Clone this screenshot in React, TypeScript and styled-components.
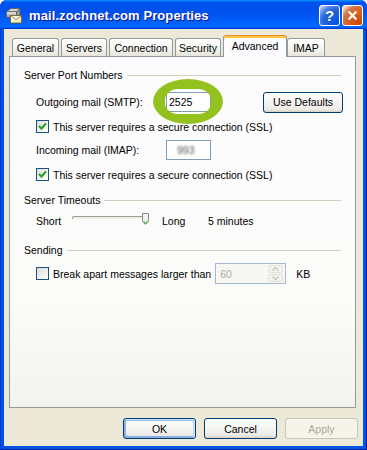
import React from "react";
import styled, { createGlobalStyle } from "styled-components";

const GlobalStyle = createGlobalStyle`
  html, body { margin: 0; padding: 0; background: #ffffff; }
  body {
    font-family: "Liberation Sans", Arial, sans-serif;
    font-size: 10.5px;
    color: #000;
  }
  * { box-sizing: border-box; }
`;

const Window = styled.div`
  width: 367px;
  height: 450px;
  display: flex;
  flex-direction: column;
  background: #0054e3;
  border-radius: 7px 7px 0 0;
  box-shadow: inset 1px 0 #0831d9, inset -1px 0 #001ea0, inset 0 -1px #001ea0;
  overflow: hidden;
`;

const TitleBar = styled.div`
  height: 29px;
  flex: none;
  display: flex;
  align-items: center;
  padding: 2px 4px 0 5px;
  background: linear-gradient(
    180deg,
    #0997ff,
    #0053ee 8%,
    #0050ee 40%,
    #0066ff 88%,
    #0066ff 93%,
    #005bff 95%,
    #003dd7 96%,
    #003dd7
  );
`;

const TitleText = styled.span`
  flex: 1;
  margin-left: 6px;
  font-weight: bold;
  font-size: 13px;
  color: #fff;
  text-shadow: 1px 1px #0f1089;
  letter-spacing: 0.1px;
`;

const CaptionButton = styled.div<{ $close?: boolean }>`
  width: 21px;
  height: 21px;
  margin-left: 2px;
  border: 1px solid #fff;
  border-radius: 3px;
  display: flex;
  align-items: center;
  justify-content: center;
  color: #fff;
  font-weight: bold;
  font-size: 15px;
  background: ${(p) =>
    p.$close
      ? "radial-gradient(circle at 90% 90%, #cc4600 0, #dc6527 55%, #cd7546 70%, #ffccb2 90%, #fff)"
      : "radial-gradient(circle at 90% 90%, #0054e9 0, #2263d5 55%, #4479e4 70%, #a3bbec 90%, #fff)"};
`;

const Body = styled.div`
  flex: 1;
  margin: 0 4px 4px;
  background: #ece9d8;
  display: flex;
  flex-direction: column;
  padding: 6px 5px 7px 5px;
`;

const TabStrip = styled.div`
  display: flex;
  align-items: flex-end;
  gap: 2px;
  height: 22px;
  margin-bottom: -1px;
  padding-left: 3px;
  position: relative;
  z-index: 1;
`;

const Tab = styled.div<{ $w: number; $active?: boolean }>`
  width: ${(p) => p.$w}px;
  height: ${(p) => (p.$active ? 22 : 18)}px;
  margin-bottom: ${(p) => (p.$active ? 0 : 1)}px;
  margin-right: ${(p) => (p.$active ? -2 : 0)}px;
  display: flex;
  align-items: center;
  justify-content: center;
  padding-bottom: ${(p) => (p.$active ? 2 : 0)}px;
  border: 1px solid #919b9c;
  border-bottom: none;
  border-radius: 3px 3px 0 0;
  background: ${(p) =>
    p.$active ? "#fcfcfe" : "linear-gradient(180deg, #ffffff, #f3f3ef 60%, #e6e5dd)"};
  ${(p) =>
    p.$active &&
    `border-top: 1px solid #e68b2c; box-shadow: inset 0 2px #ffc83c;`}
`;

const Panel = styled.div`
  flex: 1;
  margin-right: 2px;
  border: 1px solid #919b9c;
  background: linear-gradient(180deg, #fcfcfe 0%, #fbfbf9 70%, #f4f3ee 100%);
  padding: 11px 14px 0;
  display: flex;
  flex-direction: column;
`;

const SectionHeader = styled.div<{ $top: number }>`
  display: flex;
  align-items: center;
  height: 14px;
  margin-top: ${(p) => p.$top}px;
  &::after {
    content: "";
    flex: 1;
    height: 1px;
    margin-left: 4px;
    background: #d0d0bf;
  }
`;

const Row = styled.div<{ $top: number; $h: number }>`
  display: flex;
  align-items: center;
  height: ${(p) => p.$h}px;
  margin-top: ${(p) => p.$top}px;
  padding-left: 12px;
`;

const FieldLabel = styled.span<{ $w: number; $gap?: number }>`
  width: ${(p) => p.$w}px;
  margin-left: ${(p) => p.$gap ?? 0}px;
  flex: none;
`;

const TextBox = styled.div`
  position: relative;
  width: 45px;
  height: 20px;
  border: 1px solid #7f9db9;
  background: #fff;
  display: flex;
  align-items: center;
  padding-left: 2px;
`;

const Blurred = styled.span`
  color: #555;
  filter: blur(1.3px);
  padding-left: 8px;
`;

const Highlight = styled.svg`
  position: absolute;
  left: -14px;
  top: -14px;
  width: 70px;
  height: 45px;
  pointer-events: none;
`;

const PushButton = styled.button<{ $w: number; $default?: boolean }>`
  width: ${(p) => p.$w}px;
  height: 21px;
  padding: 0;
  flex: none;
  border: 1px solid ${(p) => (p.disabled ? "#c9c7ba" : "#003c74")};
  border-radius: 3px;
  font-family: inherit;
  font-size: 10.5px;
  color: ${(p) => (p.disabled ? "#aca899" : "#000")};
  background: ${(p) =>
    p.disabled ? "#f5f4ea" : "linear-gradient(180deg, #ffffff, #ecebe6 86%, #d6d0c5)"};
  box-shadow: ${(p) =>
    p.$default
      ? "inset -1px 1px #cee7ff, inset 1px 2px #98b8ea, inset -2px 2px #bcd4f6, inset 1px -1px #89ade4, inset 2px -2px #89ade4"
      : "none"};
`;

const EdgeButton = styled(PushButton)`
  margin-left: auto;
  margin-right: -2px;
`;

const CheckBox = styled.span`
  width: 13px;
  height: 13px;
  flex: none;
  border: 1px solid #1c5180;
  background: linear-gradient(135deg, #dcdcd7, #ffffff);
  display: flex;
  align-items: center;
  justify-content: center;
`;

const CheckText = styled.span`
  margin-left: 4px;
`;

const Slider = styled.div`
  position: relative;
  width: 77px;
  height: 16px;
  flex: none;
`;

const SliderTrack = styled.div`
  margin-top: 3px;
  height: 4px;
  border: 1px solid;
  border-color: #9d9c99 #ffffff #ffffff #9d9c99;
  border-radius: 2px;
  background: #f0efe6;
`;

const SliderThumb = styled.svg`
  position: absolute;
  right: 0;
  top: 0;
  width: 7px;
  height: 12px;
`;

const Spinner = styled.div`
  width: 71px;
  height: 21px;
  margin-left: 4px;
  flex: none;
  border: 1px solid #a7b7d3;
  background: #f7f7f3;
  display: flex;
  align-items: center;
  padding: 1px 2px 1px 4px;
  color: #aca899;
`;

const SpinValue = styled.span`
  flex: 1;
`;

const SpinArrows = styled.div`
  width: 15px;
  height: 17px;
  display: flex;
  flex-direction: column;
  gap: 1px;
`;

const SpinHalf = styled.div`
  flex: 1;
  border: 1px solid #e2e1d8;
  border-radius: 2px;
  background: #f3f3ee;
  display: flex;
  align-items: center;
  justify-content: center;
`;

const Unit = styled.span`
  margin-left: 10px;
`;

const ButtonRow = styled.div`
  display: flex;
  justify-content: flex-end;
  gap: 8px;
  margin-top: 10px;
`;

const MailIcon = () => (
  <svg width="18" height="17" viewBox="0 0 18 17">
    <defs>
      <linearGradient id="srv" x1="0" y1="0" x2="0" y2="1">
        <stop offset="0" stopColor="#f2f2f2" />
        <stop offset="1" stopColor="#8d8d8d" />
      </linearGradient>
      <linearGradient id="env" x1="0" y1="0" x2="1" y2="1">
        <stop offset="0" stopColor="#ffffff" />
        <stop offset="1" stopColor="#f3e49a" />
      </linearGradient>
    </defs>
    <path d="M1.5 4.5 L6 1.5 H15 L11.5 4.5 Z" fill="#d8d8d8" stroke="#5d5d5d" strokeWidth="0.8" />
    <rect x="1.5" y="4.5" width="10" height="6" fill="url(#srv)" stroke="#5d5d5d" strokeWidth="0.8" />
    <path d="M11.5 4.5 L15 1.5 V7.5 L11.5 10.5 Z" fill="#9a9a9a" stroke="#5d5d5d" strokeWidth="0.8" />
    <rect x="5.5" y="8.5" width="11" height="7.5" fill="url(#env)" stroke="#6b5b24" strokeWidth="0.8" />
    <path d="M5.8 8.8 L11 12.8 L16.2 8.8" fill="none" stroke="#8a7a3a" strokeWidth="0.8" />
  </svg>
);

const CheckMark = () => (
  <svg width="9" height="9" viewBox="0 0 9 9">
    <path d="M1 4 L3.5 6.5 L8 1.5" fill="none" stroke="#21a121" strokeWidth="2" />
  </svg>
);

const Arrow = ({ up }: { up?: boolean }) => (
  <svg width="7" height="4" viewBox="0 0 7 4">
    <path d={up ? "M0.5 3.5 L3.5 0.5 L6.5 3.5" : "M0.5 0.5 L3.5 3.5 L6.5 0.5"} fill="none" stroke="#c2c1b8" strokeWidth="1.2" />
  </svg>
);

export default function App() {
  return (
    <>
      <GlobalStyle />
      <Window>
        <TitleBar>
          <MailIcon />
          <TitleText>mail.zochnet.com Properties</TitleText>
          <CaptionButton>?</CaptionButton>
          <CaptionButton $close>
            <svg width="11" height="11" viewBox="0 0 11 11">
              <path d="M1.5 1.5 L9.5 9.5 M9.5 1.5 L1.5 9.5" stroke="#fff" strokeWidth="2.2" />
            </svg>
          </CaptionButton>
        </TitleBar>

        <Body>
          <TabStrip>
            <Tab $w={47}>General</Tab>
            <Tab $w={46}>Servers</Tab>
            <Tab $w={64}>Connection</Tab>
            <Tab $w={46}>Security</Tab>
            <Tab $w={64} $active>
              Advanced
            </Tab>
            <Tab $w={38}>IMAP</Tab>
          </TabStrip>

          <Panel>
            <SectionHeader $top={0}>Server Port Numbers</SectionHeader>
            <Row $top={9} $h={22}>
              <FieldLabel $w={130}>Outgoing mail (SMTP):</FieldLabel>
              <TextBox>
                2525
                <Highlight viewBox="0 0 70 45">
                  <path
                    fillRule="evenodd"
                    fill="#93c11d"
                    d="M0 22.5 A35 22.5 0 1 0 70 22.5 A35 22.5 0 1 0 0 22.5 Z
                       M25 10 H45 A13 11 0 0 1 58 21 V24 A13 11 0 0 1 45 35 H25 A13 11 0 0 1 12 24 V21 A13 11 0 0 1 25 10 Z"
                  />
                </Highlight>
              </TextBox>
              <EdgeButton $w={80}>Use Defaults</EdgeButton>
            </Row>
            <Row $top={7} $h={13}>
              <CheckBox>
                <CheckMark />
              </CheckBox>
              <CheckText>This server requires a secure connection (SSL)</CheckText>
            </Row>
            <Row $top={6} $h={22}>
              <FieldLabel $w={130}>Incoming mail (IMAP):</FieldLabel>
              <TextBox>
                <Blurred>993</Blurred>
              </TextBox>
            </Row>
            <Row $top={7} $h={13}>
              <CheckBox>
                <CheckMark />
              </CheckBox>
              <CheckText>This server requires a secure connection (SSL)</CheckText>
            </Row>

            <SectionHeader $top={12}>Server Timeouts</SectionHeader>
            <Row $top={6} $h={16}>
              <FieldLabel $w={36}>Short</FieldLabel>
              <Slider>
                <SliderTrack />
                <SliderThumb viewBox="0 0 7 12">
                  <path d="M0.5 0.5 H6.5 V8 L3.5 11.5 L0.5 8 Z" fill="#f4f4f0" stroke="#8a8a80" />
                  <path d="M1.5 8.2 L3.5 10.4 L5.5 8.2" fill="none" stroke="#21a121" />
                </SliderThumb>
              </Slider>
              <FieldLabel $w={46} $gap={13}>
                Long
              </FieldLabel>
              <span>5 minutes</span>
            </Row>

            <SectionHeader $top={14}>Sending</SectionHeader>
            <Row $top={6} $h={21}>
              <CheckBox />
              <CheckText>Break apart messages larger than</CheckText>
              <Spinner>
                <SpinValue>60</SpinValue>
                <SpinArrows>
                  <SpinHalf>
                    <Arrow up />
                  </SpinHalf>
                  <SpinHalf>
                    <Arrow />
                  </SpinHalf>
                </SpinArrows>
              </Spinner>
              <Unit>KB</Unit>
            </Row>
          </Panel>

          <ButtonRow>
            <PushButton $w={73} $default>
              OK
            </PushButton>
            <PushButton $w={73}>Cancel</PushButton>
            <PushButton $w={73} disabled>
              Apply
            </PushButton>
          </ButtonRow>
        </Body>
      </Window>
    </>
  );
}
